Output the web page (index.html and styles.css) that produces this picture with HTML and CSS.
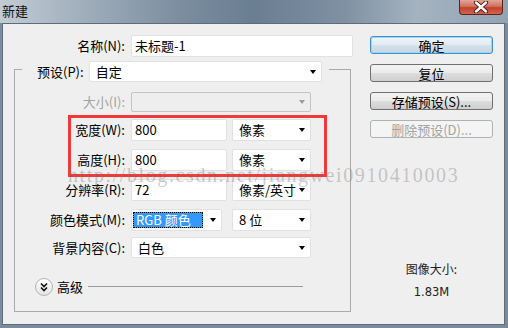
FILE: index.html
```html
<!DOCTYPE html>
<html lang="zh-CN">
<head>
  <meta charset="UTF-8">
  <title>新建</title>
  <link rel="stylesheet" href="styles.css">
</head>
<body>
  <div class="window">
    <div class="titlebar">
      <span class="title">新建</span>
      <div class="close-btn">
        <svg width="16" height="12" viewBox="0 0 16 12">
          <path d="M3 1.5 L13 10.5 M13 1.5 L3 10.5" stroke="#3a1410" stroke-width="4.2" stroke-linecap="round"/>
          <path d="M3 1.5 L13 10.5 M13 1.5 L3 10.5" stroke="#ffffff" stroke-width="2.4" stroke-linecap="round"/>
        </svg>
      </div>
    </div>

    <div class="client">
      <div class="form-col">
        <div class="row name-row">
          <label class="lbl name-lbl">名称(N):</label>
          <div class="field name-field">未标题-1</div>
        </div>

        <div class="group">
          <div class="legend">
            <label class="lbl">预设(P):</label>
            <div class="field combo preset-field">自定<span class="arrow"></span></div>
          </div>

          <div class="row g-row size-row">
            <label class="lbl g-lbl disabled">大小(I):</label>
            <div class="field combo disabled-field size-field"><span class="arrow gray"></span></div>
          </div>

          <div class="mark">
            <div class="row m-row">
              <label class="lbl m-lbl">宽度(W):</label>
              <div class="field num-field">800</div>
              <div class="field combo unit-field">像素<span class="arrow"></span></div>
            </div>
            <div class="row m-row second">
              <label class="lbl m-lbl">高度(H):</label>
              <div class="field num-field">800</div>
              <div class="field combo unit-field">像素<span class="arrow"></span></div>
            </div>
          </div>

          <div class="row g-row res-row">
            <label class="lbl g-lbl">分辨率(R):</label>
            <div class="field num-field">72</div>
            <div class="field combo unit-field">像素/英寸<span class="arrow"></span></div>
          </div>

          <div class="row g-row mode-row">
            <label class="lbl g-lbl">颜色模式(M):</label>
            <div class="field combo mode-field"><span class="selected">RGB 颜色</span><span class="arrow"></span></div>
            <div class="field combo unit-field bits-field">8 位<span class="arrow"></span></div>
          </div>

          <div class="row g-row bg-row">
            <label class="lbl g-lbl">背景内容(C):</label>
            <div class="field combo bg-field">白色<span class="arrow"></span></div>
          </div>

          <div class="advanced">
            <span class="adv-btn">
              <svg width="16" height="16" viewBox="0 0 16 16">
                <path d="M5 4.5 L8 7.5 L11 4.5 M5 8.5 L8 11.5 L11 8.5" fill="none" stroke="#111" stroke-width="1.6"/>
              </svg>
            </span>
            <span class="adv-lbl">高级</span>
            <span class="adv-line"></span>
          </div>
        </div>
      </div>

      <div class="side-col">
        <button class="btn default">确定</button>
        <button class="btn">复位</button>
        <button class="btn">存储预设(S)...</button>
        <button class="btn" disabled>删除预设(D)...</button>
        <div class="info">
          <div class="info-title">图像大小:</div>
          <div class="info-value">1.83M</div>
        </div>
      </div>
    </div>

    <div class="watermark">http://blog.csdn.net/jiangwei0910410003</div>
  </div>
</body>
</html>
```

FILE: styles.css
```css
body {
  margin: 0;
  font-family: "Noto Sans CJK SC", sans-serif;
  font-size: 13px;
  color: #000;
}
.window {
  position: relative;
  width: 508px;
  height: 328px;
  overflow: hidden;
  background: #7b8c9d;
}
.titlebar {
  display: flex;
  height: 23px;
  background: linear-gradient(to right, #c3ccd5 0%, #a9b6c2 12%, #7c8ea0 35%, #6a7e92 50%, #7f91a3 68%, #a5b3c0 82%, #93a3b2 100%);
}
.title {
  padding: 3px 0 0 2px;
  line-height: 16px;
  color: #111;
}
.close-btn {
  display: flex;
  align-items: center;
  justify-content: center;
  margin-left: auto;
  margin-right: 5px;
  width: 44px;
  height: 15px;
  box-sizing: border-box;
  border: 1px solid #5b211a;
  border-top: none;
  border-radius: 0 0 4px 4px;
  background: linear-gradient(#e3a596 0%, #d2705f 45%, #c0412e 55%, #d8644e 100%);
}
.client {
  display: flex;
  box-sizing: border-box;
  width: 503px;
  height: 302px;
  margin-left: 2px;
  border: 1px solid #5f6b77;
  background: #efefef;
}
.form-col {
  width: 367px;
  padding-top: 11px;
}
.row {
  display: flex;
  gap: 6px;
}
.lbl {
  text-align: right;
  white-space: nowrap;
  line-height: 22px;
}
.lbl.disabled {
  color: #a3a3a3;
}
.name-lbl {
  width: 122px;
}
.field {
  box-sizing: border-box;
  height: 22px;
  padding-left: 3px;
  border: 1px solid #e1e1e1;
  border-radius: 2px;
  background: #fff;
  line-height: 20px;
  white-space: nowrap;
}
.combo {
  display: flex;
  align-items: center;
  padding-left: 6px;
}
.arrow {
  width: 0;
  height: 0;
  margin-left: auto;
  margin-right: 5px;
  border-left: 3.5px solid transparent;
  border-right: 3.5px solid transparent;
  border-top: 4px solid #000;
}
.arrow.gray {
  border-top-color: #9b9b9b;
}
.name-field {
  width: 222px;
}
.group {
  box-sizing: border-box;
  width: 337px;
  height: 243px;
  margin: 12px 0 0 11px;
  border: 1px solid #aaaaaa;
}
.legend {
  display: flex;
  gap: 5px;
  box-sizing: border-box;
  width: 307px;
  margin: -9px 0 0 7px;
  padding: 0 7px 0 15px;
  background: #efefef;
}
.legend .lbl {
  line-height: 21px;
}
.preset-field {
  width: 235px;
  height: 21px;
}
.g-lbl {
  width: 110px;
}
.size-row {
  margin-top: 10px;
}
.size-row .lbl {
  line-height: 20px;
}
.size-field {
  width: 180px;
  height: 20px;
}
.disabled-field {
  background: #eeeeee;
  border-color: #c4c4c4;
}
.mark {
  box-sizing: border-box;
  width: 259px;
  margin: 3px 0 0 53px;
  padding: 1px 0 3px;
  border: 3px solid #f03a3a;
}
.m-row.second {
  margin-top: 8px;
}
.m-lbl {
  width: 54px;
}
.num-field {
  width: 96px;
}
.unit-field {
  width: 79px;
  margin-left: -1px;
}
.res-row {
  margin-top: 2px;
}
.mode-row {
  margin-top: 8px;
}
.mode-field {
  width: 91px;
  padding-left: 1px;
}
.selected {
  box-sizing: border-box;
  width: 70px;
  height: 16px;
  padding-left: 3px;
  outline: 1px dotted #000;
  outline-offset: -1px;
  background: #3399ff;
  color: #fff;
  line-height: 16px;
}
.bits-field {
  margin-left: 4px;
}
.bg-row {
  margin-top: 6px;
}
.bg-field {
  width: 180px;
  height: 21px;
}
.advanced {
  display: flex;
  align-items: center;
  height: 18px;
  margin: 19px 47px 0 20px;
}
.adv-btn {
  display: flex;
  align-items: center;
  justify-content: center;
  box-sizing: border-box;
  width: 18px;
  height: 18px;
  border: 1px solid #b3b3b3;
  border-radius: 50%;
  background: linear-gradient(#ffffff, #e4e4e4);
}
.adv-lbl {
  margin-left: 4px;
  line-height: 18px;
}
.adv-line {
  flex: 1;
  height: 1px;
  margin: 0 0 2px 5px;
  background: #9c9c9c;
}
.side-col {
  display: flex;
  flex-direction: column;
  gap: 10px;
  width: 123px;
  padding-top: 12px;
}
.btn {
  height: 18px;
  padding: 0;
  border: 1px solid #707070;
  border-radius: 3px;
  background: linear-gradient(#f3f3f3 0%, #ebebeb 48%, #dddddd 52%, #cfcfcf 100%);
  font-family: "Noto Sans CJK SC", sans-serif;
  font-size: 13px;
  line-height: 15px;
  color: #000;
}
.btn.default {
  border-color: #3c8fd0;
  box-shadow: inset 0 0 0 1px #9ed6f7;
  background: linear-gradient(#eef5f9 0%, #e2ecf2 48%, #d3e1ea 52%, #c6d6e1 100%);
}
.btn:disabled {
  border-color: #adb2b5;
  background: #f4f4f4;
  color: #a3a3a3;
}
.info {
  margin-top: 112px;
  text-align: center;
  color: #222;
}
.info-title {
  font-size: 12px;
  line-height: 18px;
}
.info-value {
  margin-top: 5px;
  font-family: "DejaVu Sans", sans-serif;
  font-size: 11.5px;
  line-height: 18px;
}
.watermark {
  position: absolute;
  left: 68px;
  top: 165px;
  font-family: "Liberation Serif", serif;
  font-size: 20px;
  line-height: 20px;
  letter-spacing: 1.6px;
  color: rgba(110, 110, 110, 0.35);
  white-space: nowrap;
  pointer-events: none;
}
```
